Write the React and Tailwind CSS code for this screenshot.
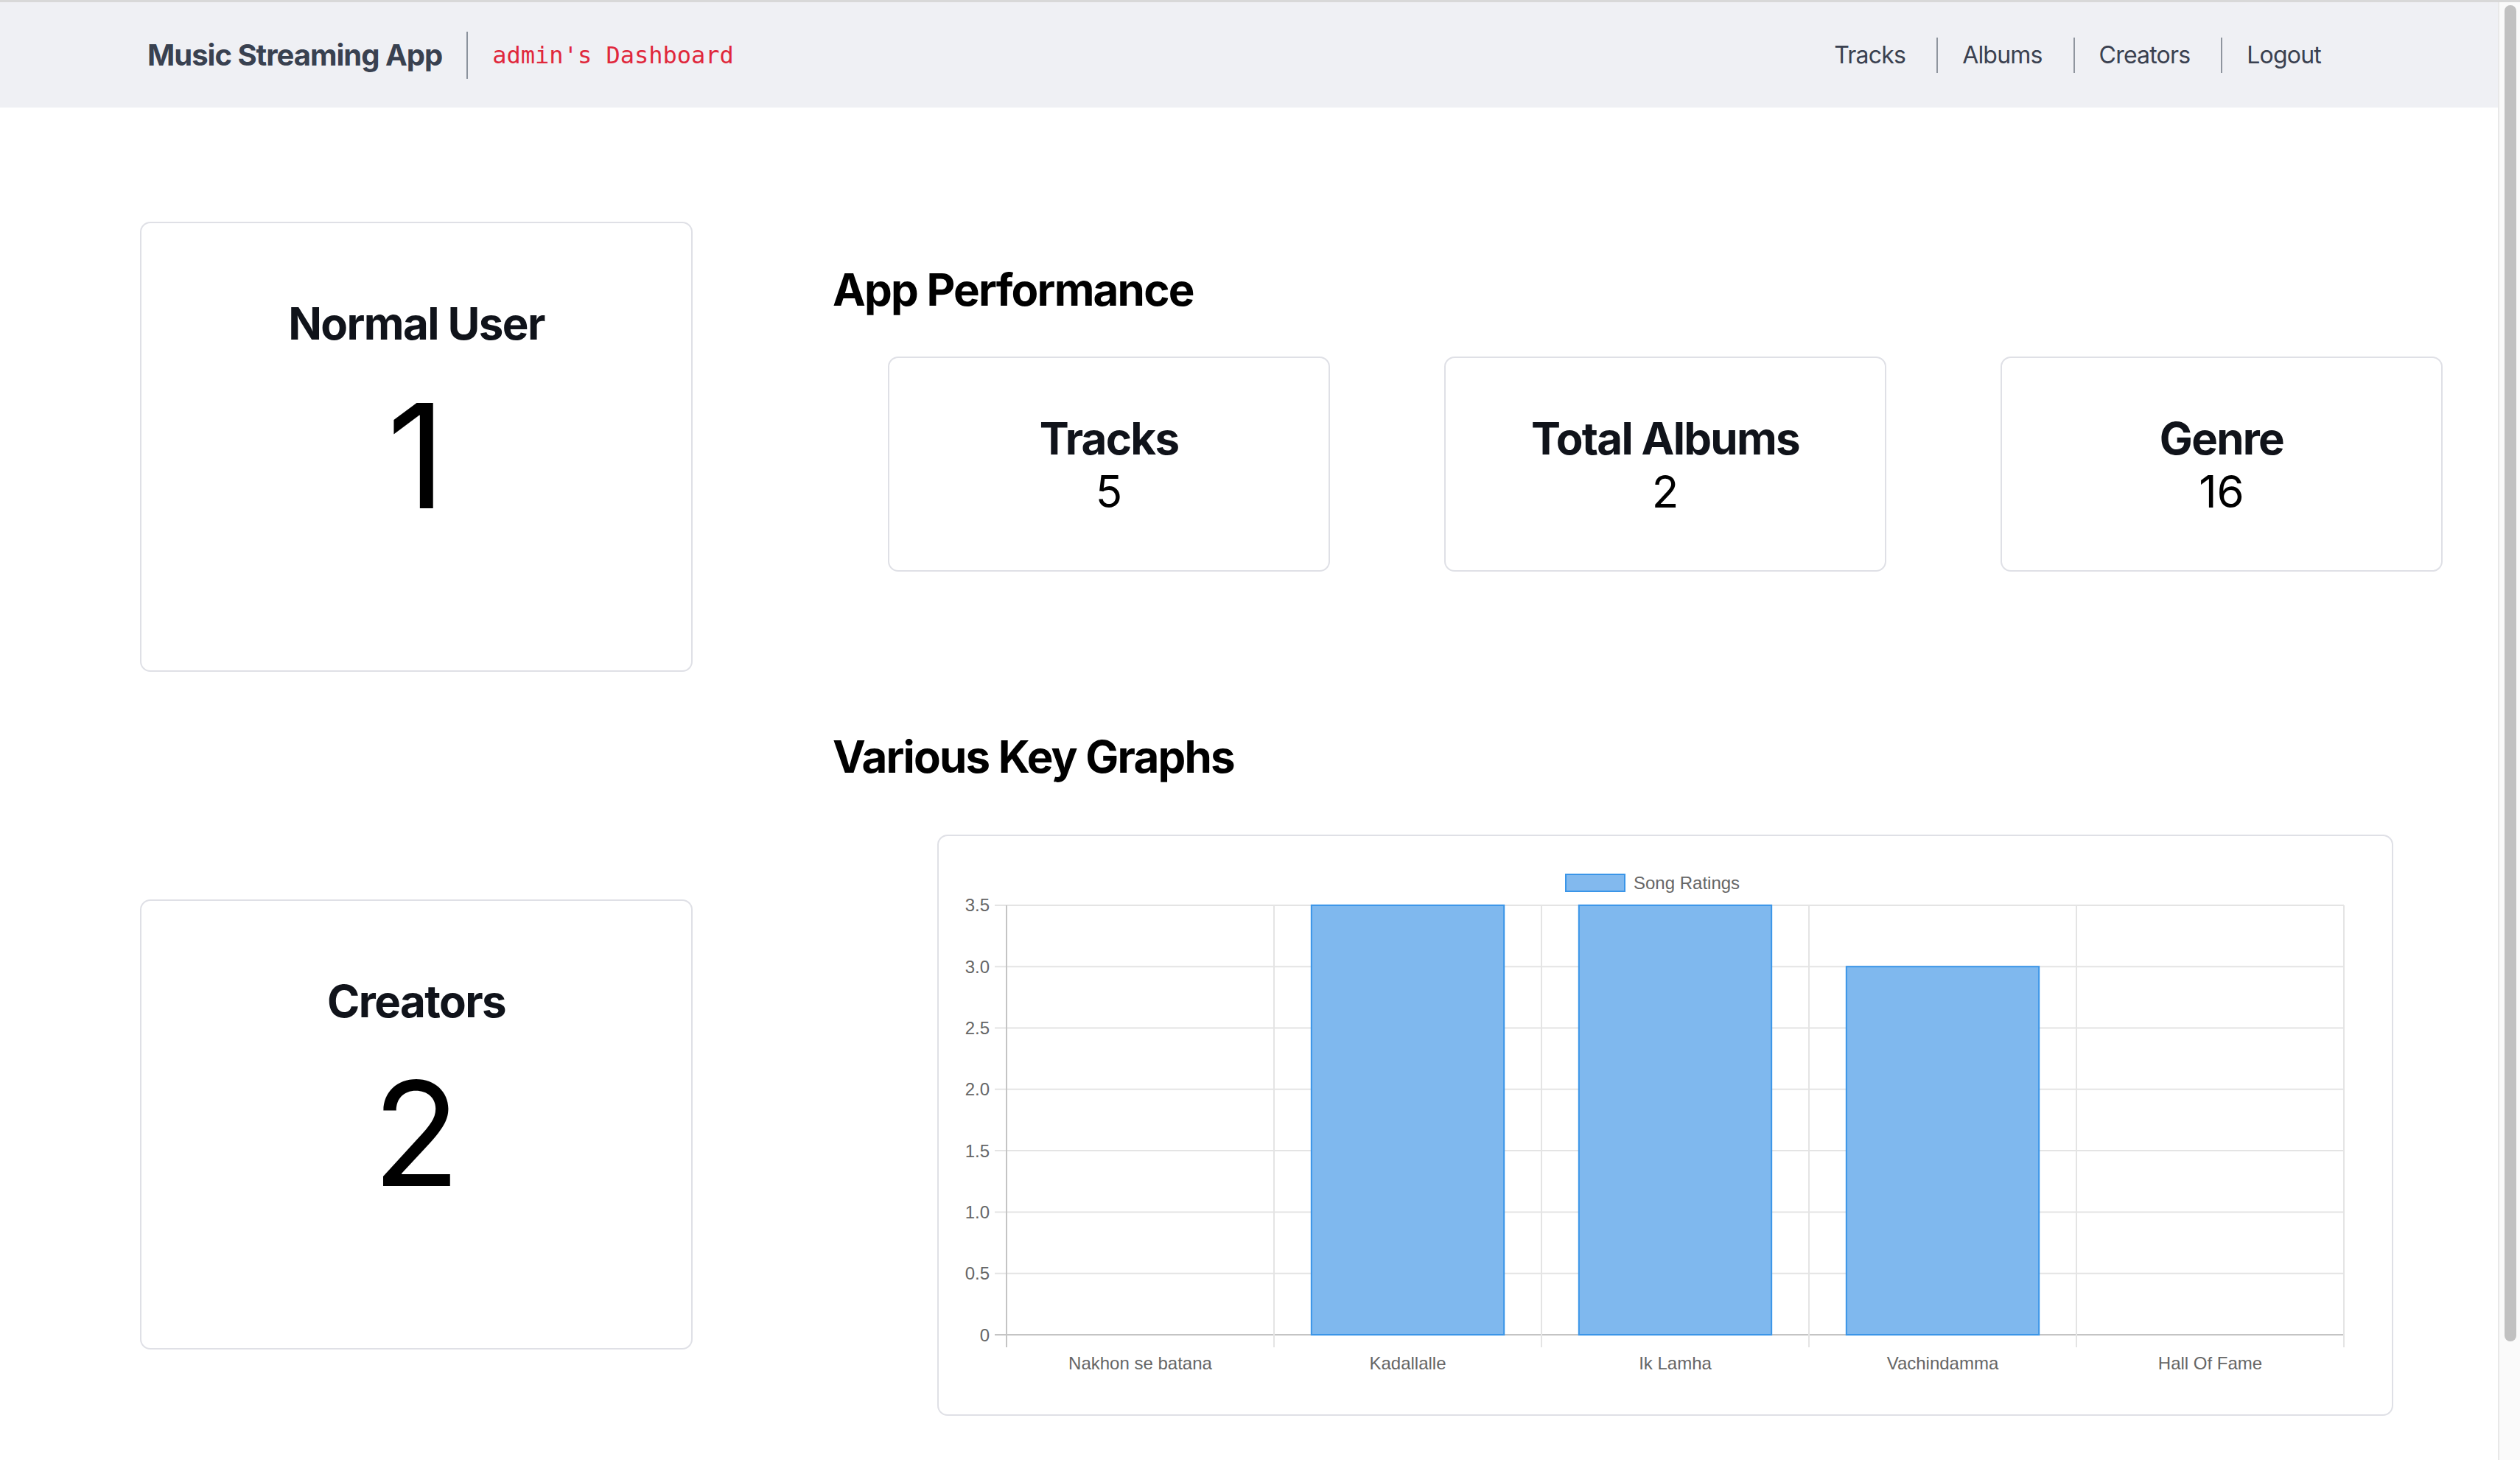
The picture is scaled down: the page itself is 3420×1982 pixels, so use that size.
import React from "react";

const SANS = "font-['Inter','Noto_Sans',sans-serif]";

// chart data
const songs = [
  { name: "Nakhon se batana", rating: 0 },
  { name: "Kadallalle", rating: 3.5 },
  { name: "Ik Lamha", rating: 3.5 },
  { name: "Vachindamma", rating: 3 },
  { name: "Hall Of Fame", rating: 0 },
];

function NavLinks() {
  const links = ["Tracks", "Albums", "Creators", "Logout"];
  return (
    <div className="flex items-center pr-[240px]">
      {links.map((l, i) => (
        <div key={l} className="flex items-center">
          {i > 0 && <div className="ml-[42px] mr-[33px] h-[48px] w-[2px] bg-[#8f959e]" />}
          <a className="text-[32px] tracking-[-0.8px] text-[#3a4150] cursor-pointer">{l}</a>
        </div>
      ))}
    </div>
  );
}

function BigCard({ title, value }) {
  return (
    <div className="h-[611px] w-[750px] rounded-[14px] border-2 border-[#dfe0e6] bg-white pt-[100px] text-center">
      <h3 className="text-[60px] leading-[72px] font-bold tracking-[-1.6px] text-[#10131a]">{title}</h3>
      <div className="mt-[44px] text-[196px] leading-[200px] font-normal text-black">{value}</div>
    </div>
  );
}

function StatCard({ title, value }) {
  return (
    <div className="h-[292px] w-[600px] rounded-[14px] border-2 border-[#dfe0e6] bg-white pt-[73px] text-center">
      <h3 className="text-[60px] leading-[72px] font-bold tracking-[-1.7px] text-[#10131a]">{title}</h3>
      <div className="text-[60px] leading-[72px] text-black">{value}</div>
    </div>
  );
}

function RatingsChart() {
  const left = 92;
  const cat = 363;
  const zeroY = 677;
  const step = 83.3; // px per 0.5
  const ticks = [0, 0.5, 1, 1.5, 2, 2.5, 3, 3.5];
  const yOf = (v) => zeroY - (v / 0.5) * step;
  const right = left + cat * songs.length;
  const lbl = { fontFamily: "'Liberation Sans', Arial, sans-serif", fontSize: 24, fill: "#666" };

  return (
    <svg width="1972" height="785" viewBox="0 0 1972 785">
      {/* legend */}
      <rect x="851" y="52" width="80" height="23" fill="#82b9ee" stroke="#3a95e8" strokeWidth="2" />
      <text x="943" y="72" style={lbl}>Song Ratings</text>

      {/* horizontal grid */}
      {ticks.map((t) => (
        <g key={t}>
          <line x1={left - 16} x2={right} y1={yOf(t)} y2={yOf(t)} stroke={t === 0 ? "#c4c4c4" : "#e4e4e4"} strokeWidth="2" />
          <text x="69" y={yOf(t)} textAnchor="end" dominantBaseline="central" style={lbl}>
            {t === 0 ? "0" : t.toFixed(1)}
          </text>
        </g>
      ))}

      {/* vertical grid */}
      {songs.map((_, i) => (
        <line key={i} x1={left + cat * i} x2={left + cat * i} y1={yOf(3.5)} y2={zeroY + 17} stroke={i === 0 ? "#c4c4c4" : "#e4e4e4"} strokeWidth="2" />
      ))}
      <line x1={right} x2={right} y1={yOf(3.5)} y2={zeroY + 17} stroke="#e4e4e4" strokeWidth="2" />

      {/* bars */}
      {songs.map((s, i) => {
        if (!s.rating) return null;
        const w = cat * 0.72;
        const x = left + cat * i + (cat - w) / 2;
        const y = yOf(s.rating);
        return <rect key={s.name} x={x} y={y} width={w} height={zeroY - y} fill="#7fb8ee" stroke="#3a95e8" strokeWidth="2" />;
      })}

      {/* x labels */}
      {songs.map((s, i) => (
        <text key={s.name} x={left + cat * i + cat / 2} y="715" textAnchor="middle" dominantBaseline="central" style={lbl}>
          {s.name}
        </text>
      ))}
    </svg>
  );
}

export default function App() {
  return (
    <div className={`flex h-[1982px] w-[3420px] flex-col overflow-hidden bg-white ${SANS}`}>
      <div className="h-[3px] w-full shrink-0 bg-[#d8d8d8]" />
      <div className="flex flex-1 overflow-hidden">
        {/* ===================== PAGE ===================== */}
        <div className="flex w-[3390px] flex-col">
          {/* NAVBAR */}
          <header className="flex h-[143px] shrink-0 items-center justify-between bg-[#eff0f4]">
            <div className="flex items-center pl-[200px]">
              <span className="text-[40px] font-bold tracking-[-1px] text-[#394150]">Music Streaming App</span>
              <div className="ml-[33px] h-[64px] w-[2px] bg-[#8b929c]" />
              <span className="ml-[33px] font-['DejaVu_Sans_Mono','Liberation_Mono',monospace] text-[32px] text-[#e0283c]">
                admin's Dashboard
              </span>
            </div>
            <NavLinks />
          </header>

          {/* CONTENT */}
          <div className="flex pl-[190px]">
            <div className="flex flex-col">
              <div className="mt-[155px]">
                <BigCard title="Normal User" value="1" />
              </div>
              <div className="mt-[309px]">
                <BigCard title="Creators" value="2" />
              </div>
            </div>

            <div className="ml-[190px] flex flex-col">
              <h3 className="mt-[211px] text-[60px] leading-[72px] font-bold tracking-[-1.8px] text-black">App Performance</h3>
              <div className="mt-[55px] ml-[75px] flex gap-[155px]">
                <StatCard title="Tracks" value="5" />
                <StatCard title="Total Albums" value="2" />
                <StatCard title="Genre" value="16" />
              </div>

              <h3 className="mt-[215px] text-[60px] leading-[72px] font-bold tracking-[-1.8px] text-black">Various Key Graphs</h3>
              <div className="mt-[70px] ml-[142px] h-[789px] w-[1976px] rounded-[14px] border-2 border-[#dfe0e6] bg-white">
                <RatingsChart />
              </div>
            </div>
          </div>
        </div>

        {/* SCROLLBAR */}
        <div className="w-[30px] border-l-2 border-[#e8e8e8] bg-[#fafafa] pt-[4px] pl-[7px]">
          <div className="h-[1814px] w-[16px] rounded-full bg-[#c1c1c1]" />
        </div>
      </div>
    </div>
  );
}
